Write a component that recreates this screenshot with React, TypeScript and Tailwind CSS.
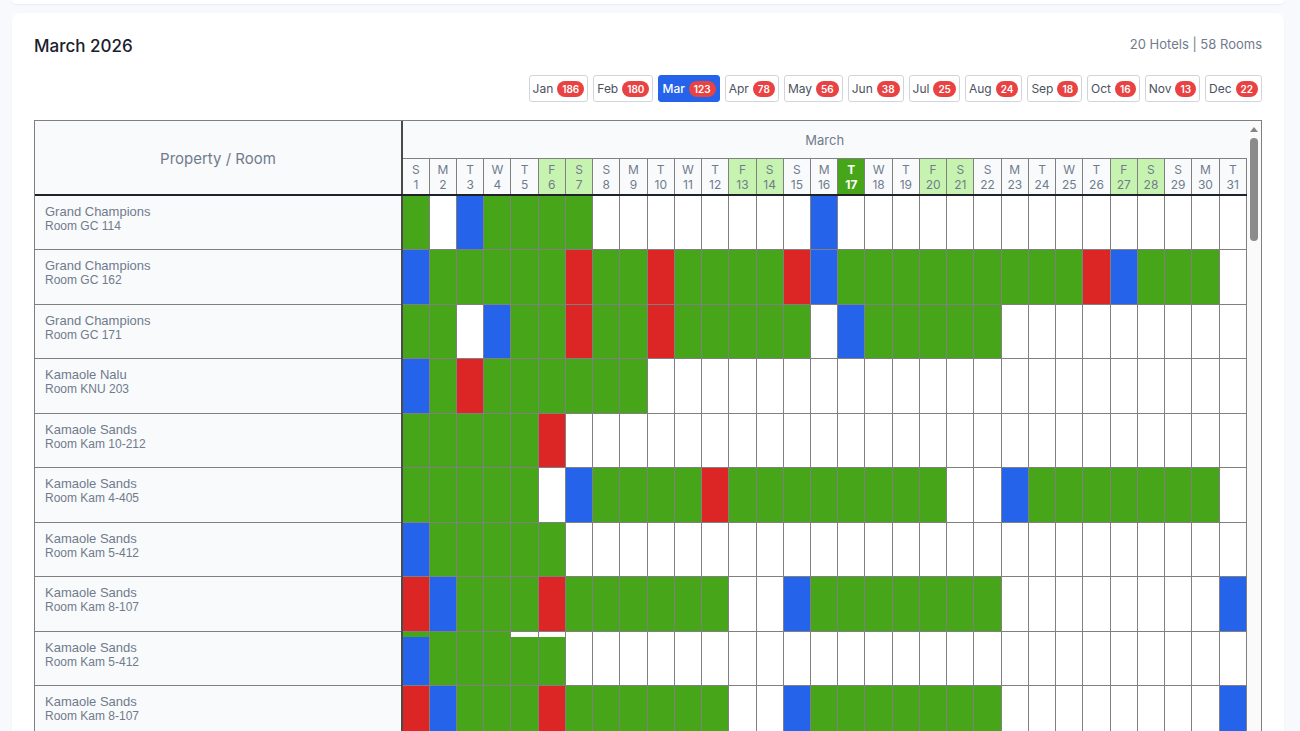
import { useState } from 'react'

const months = [
  { name: 'Jan', count: 186 },
  { name: 'Feb', count: 180 },
  { name: 'Mar', count: 123 },
  { name: 'Apr', count: 78 },
  { name: 'May', count: 56 },
  { name: 'Jun', count: 38 },
  { name: 'Jul', count: 25 },
  { name: 'Aug', count: 24 },
  { name: 'Sep', count: 18 },
  { name: 'Oct', count: 16 },
  { name: 'Nov', count: 13 },
  { name: 'Dec', count: 22 },
]

// One letter per day: G = booked, B = check-in, R = turnover, . = free
const rooms = [
  { property: 'Grand Champions', room: 'Room GC 114', days: 'G.BGGGG........B...............' },
  { property: 'Grand Champions', room: 'Room GC 162', days: 'BGGGGGRGGRGGGGRBGGGGGGGGGRBGGG.' },
  { property: 'Grand Champions', room: 'Room GC 171', days: 'GG.BGGRGGRGGGGG.BGGGGG.........' },
  { property: 'Kamaole Nalu', room: 'Room KNU 203', days: 'BGRGGGGGG......................' },
  { property: 'Kamaole Sands', room: 'Room Kam 10-212', days: 'GGGGGR.........................' },
  { property: 'Kamaole Sands', room: 'Room Kam 4-405', days: 'GGGGG.BGGGGRGGGGGGGG..BGGGGGGG.' },
  { property: 'Kamaole Sands', room: 'Room Kam 5-412', days: 'BGGGGG.........................' },
  { property: 'Kamaole Sands', room: 'Room Kam 8-107', days: 'RBGGGRGGGGGG..BGGGGGGG........B' },
  // overlap = the earlier stay still showing along the top edge
  { property: 'Kamaole Sands', room: 'Room Kam 5-412', days: 'BGGGGG.........................', overlap: 'GGGG..' },
  { property: 'Kamaole Sands', room: 'Room Kam 8-107', days: 'RBGGGRGGGGGG..BGGGGGGG........B' },
]

const fill: Record<string, string> = {
  G: 'bg-[#47a51a]',
  B: 'bg-[#2563eb]',
  R: 'bg-[#dc2626]',
  '.': 'bg-white',
}

const weekdays = ['S', 'M', 'T', 'W', 'T', 'F', 'S']
const days = Array.from({ length: 31 }, (_, i) => i + 1)
const today = 17

function dayClass(day: number) {
  if (day === today) return 'bg-[#47a51a] text-white font-bold'
  const weekday = (day - 1) % 7
  return weekday >= 5 ? 'bg-[#c6f4b0] font-normal' : 'bg-[#f8fafc] font-normal'
}

function Scrollbar() {
  return (
    <div className="w-3.5 shrink-0 bg-[#fafafa] flex flex-col items-center pt-1.5">
      <svg width="8" height="5" viewBox="0 0 8 5" className="mb-1.5">
        <path d="M4 0L8 5H0Z" fill="#858585" />
      </svg>
      <div className="w-2 h-[103px] rounded-full bg-[#8b8b8b]" />
    </div>
  )
}

export default function App() {
  const [active, setActive] = useState('Mar')

  return (
    <div className="h-screen overflow-hidden flex flex-col bg-[#f8f9fc] px-3 font-['Inter',sans-serif] text-[#717b8c]">
      <div className="h-1 shrink-0 mb-[9px] mr-1 bg-white rounded-b-lg shadow-xs" />

      <main className="flex-1 min-h-0 mr-1 bg-white rounded-t-lg shadow-xs px-[22px] pt-[23px] overflow-hidden">
        <header className="flex justify-between items-start h-[39px]">
          <h1 className="text-[17px] leading-5 font-medium text-[#1a202c]">March 2026</h1>
          <p className="text-[13px] leading-4">20 Hotels | 58 Rooms</p>
        </header>

        <nav className="flex justify-end gap-[5px] mb-[18px]">
          {months.map((m) => (
            <button
              key={m.name}
              onClick={() => setActive(m.name)}
              className={`flex items-center gap-1 h-[27px] px-[3px] border rounded-[3px] text-xs ${
                m.name === active
                  ? 'bg-[#2563eb] border-[#2563eb] text-white font-medium'
                  : 'bg-white border-[#d1d5db] text-[#4b5260]'
              }`}
            >
              {m.name}
              <span className="h-4 px-[5px] rounded-full bg-[#e84242] text-white text-[10px] leading-4 font-semibold">
                {m.count}
              </span>
            </button>
          ))}
        </nav>

        <div className="flex border border-[#808080]">
          <table className="flex-1 min-w-0 w-full table-fixed border-collapse">
            <colgroup>
              <col className="w-[367px]" />
              {days.map((d) => (
                <col key={d} />
              ))}
            </colgroup>
            <thead>
              <tr className="h-[37px]">
                <th
                  rowSpan={2}
                  className="pt-1 bg-[#f8fafc] border-r-2 border-r-[#4a4a4a] border-b-2 border-b-[#1f2328] text-[15px] font-normal"
                >
                  Property / Room
                </th>
                <th colSpan={31} className="pt-0.5 bg-[#f8fafc] border-b border-[#808080] text-[13px] font-normal">
                  March
                </th>
              </tr>
              <tr className="h-[37px]">
                {days.map((d) => (
                  <th
                    key={d}
                    className={`px-0 pb-0 pt-0.5 border-r border-r-[#808080] border-b-2 border-b-[#1f2328] text-xs leading-[15px] ${dayClass(d)}`}
                  >
                    {weekdays[(d - 1) % 7]}
                    <br />
                    {d}
                  </th>
                ))}
              </tr>
            </thead>
            <tbody>
              {rooms.map((r, i) => (
                <tr key={i} className="h-[54px] even:h-[55px]">
                  <th
                    scope="row"
                    className="py-0 pl-2.5 bg-[#f8fafc] border-b border-b-[#808080] border-r-2 border-r-[#4a4a4a] text-left align-top font-normal font-['Liberation_Sans',sans-serif]"
                  >
                    <div className="pt-[9px] text-[13px] leading-[14px]">{r.property}</div>
                    <div className="text-xs leading-[14px]">{r.room}</div>
                  </th>
                  {r.days.split('').map((s, d) => (
                    <td key={d} className={`p-0 align-top border-b border-r border-[#808080] ${fill[s]}`}>
                      {r.overlap?.[d] && <div className={`h-[5px] ${fill[r.overlap[d]]}`} />}
                    </td>
                  ))}
                </tr>
              ))}
            </tbody>
          </table>
          <Scrollbar />
        </div>
      </main>
    </div>
  )
}
